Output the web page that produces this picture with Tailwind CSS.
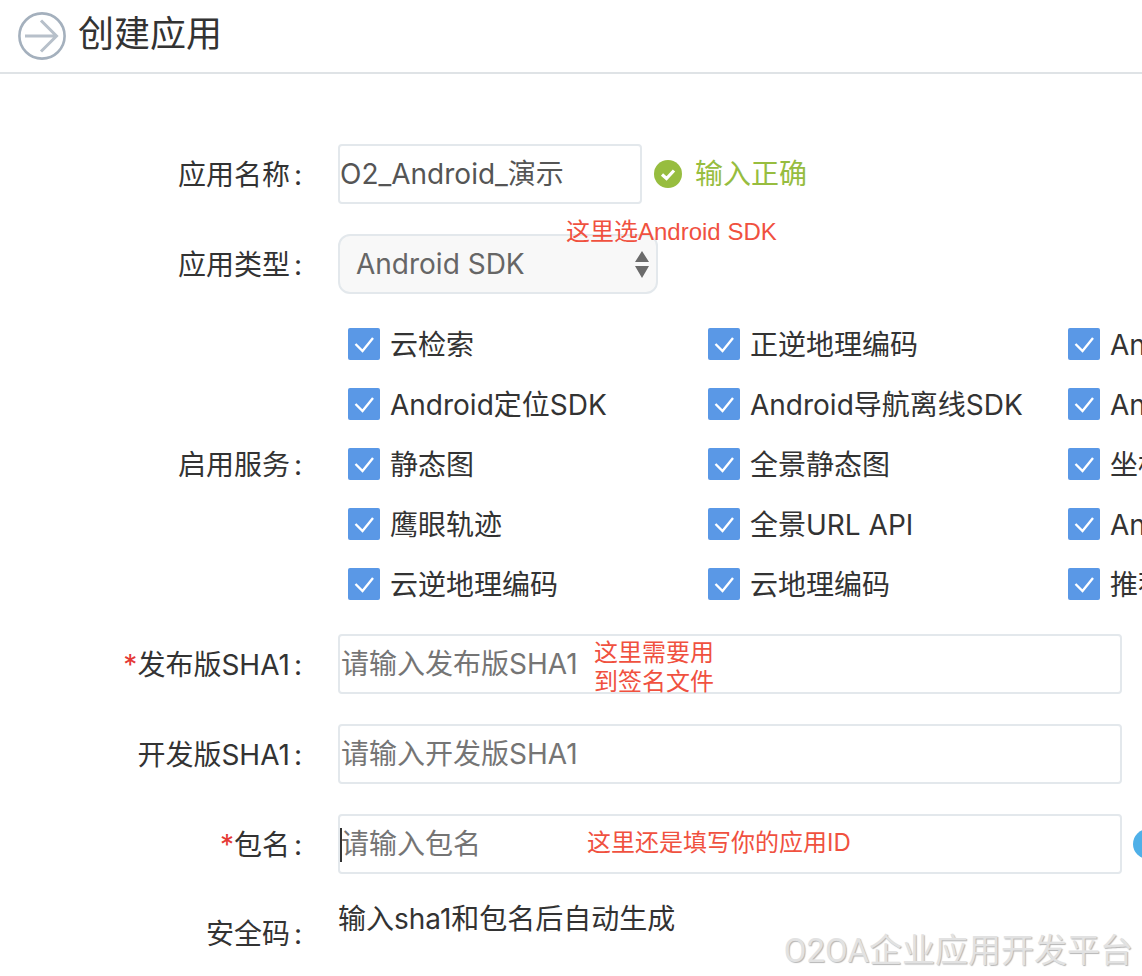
<!DOCTYPE html>
<html lang="zh-CN">
<head>
<meta charset="utf-8">
<script src="https://cdn.jsdelivr.net/npm/@tailwindcss/browser@4"></script>
<title>创建应用</title>
</head>
<body class="bg-white">
<div class="relative w-[1142px] h-[976px] overflow-hidden bg-white text-[28px] text-[#333] font-['Inter','Noto_Sans_CJK_SC',sans-serif]">
  <header class="h-[74px] border-b-2 border-[#dfe3e6] flex items-start pl-[18px] pt-[12px] gap-[12px]">
    <svg class="w-[48px] h-[48px]" viewBox="0 0 48 48" fill="none">
      <circle cx="24" cy="24" r="22.6" stroke="#a4b0bd" stroke-width="2.6"/>
      <path d="M7 24H38M23 8.5L38.5 24L23 39.5" stroke="#b7c0ca" stroke-width="3"/>
    </svg>
    <h1 class="text-[36px] leading-[44px] text-[#333]">创建应用</h1>
  </header>

  <main class="pt-[70px] flex flex-col">
    <div class="flex items-center h-[60px]">
      <label class="w-[302px] shrink-0 text-right pt-[1px]">应用名称<span class="ml-[4px]">:</span></label>
      <input class="ml-[36px] w-[304px] h-[60px] border-2 border-[#e3e8ec] rounded-[4px] pl-[0px] pb-[4px] text-[#555] outline-none" value="O2_Android_演示">
      <svg class="ml-[12px] w-[28px] h-[28px]" viewBox="0 0 28 28"><circle cx="14" cy="14" r="14" fill="#97bd3f"/><path d="M8 14.5L12.5 18.5L20 10.5" fill="none" stroke="#fff" stroke-width="3.2"/></svg>
      <span class="ml-[13px] text-[#97bd3f]">输入正确</span>
    </div>

    <div class="flex items-center h-[60px] mt-[30px]">
      <label class="w-[302px] shrink-0 text-right pt-[1px]">应用类型<span class="ml-[4px]">:</span></label>
      <div class="relative ml-[36px] w-[320px] h-[60px] border-2 border-[#e3e8ec] rounded-[12px] bg-[#f8f8f8] pl-[16px] flex items-center text-[#666]">
        Android SDK
        <svg class="absolute right-[6px] top-[15px] w-[16px] h-[28px]" viewBox="0 0 16 28"><path d="M8 0L15 11H1Z M1 15H15L8 27Z" fill="#6b6b6b"/></svg>
      </div>
    </div>

    <div class="flex items-center mt-[20px]">
      <label class="w-[302px] shrink-0 text-right pt-[1px]">启用服务<span class="ml-[4px]">:</span></label>
      <div class="ml-[46px] shrink-0 grid grid-cols-[360px_360px_360px] whitespace-nowrap">
        <div class="flex items-center gap-[10px] h-[60px]"><svg class="w-[32px] h-[32px]" viewBox="0 0 32 32"><rect width="32" height="32" rx="2" fill="#5a98e6"/><path d="M7.5 16L14.5 23L25 10" fill="none" stroke="#fff" stroke-width="2.4"/></svg><span class="pt-[2px]">云检索</span></div>
        <div class="flex items-center gap-[10px] h-[60px]"><svg class="w-[32px] h-[32px]" viewBox="0 0 32 32"><rect width="32" height="32" rx="2" fill="#5a98e6"/><path d="M7.5 16L14.5 23L25 10" fill="none" stroke="#fff" stroke-width="2.4"/></svg><span class="pt-[2px]">正逆地理编码</span></div>
        <div class="flex items-center gap-[10px] h-[60px]"><svg class="w-[32px] h-[32px]" viewBox="0 0 32 32"><rect width="32" height="32" rx="2" fill="#5a98e6"/><path d="M7.5 16L14.5 23L25 10" fill="none" stroke="#fff" stroke-width="2.4"/></svg><span class="pt-[2px]">An</span></div>
        <div class="flex items-center gap-[10px] h-[60px]"><svg class="w-[32px] h-[32px]" viewBox="0 0 32 32"><rect width="32" height="32" rx="2" fill="#5a98e6"/><path d="M7.5 16L14.5 23L25 10" fill="none" stroke="#fff" stroke-width="2.4"/></svg><span class="pt-[2px]">Android定位SDK</span></div>
        <div class="flex items-center gap-[10px] h-[60px]"><svg class="w-[32px] h-[32px]" viewBox="0 0 32 32"><rect width="32" height="32" rx="2" fill="#5a98e6"/><path d="M7.5 16L14.5 23L25 10" fill="none" stroke="#fff" stroke-width="2.4"/></svg><span class="pt-[2px]">Android导航离线SDK</span></div>
        <div class="flex items-center gap-[10px] h-[60px]"><svg class="w-[32px] h-[32px]" viewBox="0 0 32 32"><rect width="32" height="32" rx="2" fill="#5a98e6"/><path d="M7.5 16L14.5 23L25 10" fill="none" stroke="#fff" stroke-width="2.4"/></svg><span class="pt-[2px]">An</span></div>
        <div class="flex items-center gap-[10px] h-[60px]"><svg class="w-[32px] h-[32px]" viewBox="0 0 32 32"><rect width="32" height="32" rx="2" fill="#5a98e6"/><path d="M7.5 16L14.5 23L25 10" fill="none" stroke="#fff" stroke-width="2.4"/></svg><span class="pt-[2px]">静态图</span></div>
        <div class="flex items-center gap-[10px] h-[60px]"><svg class="w-[32px] h-[32px]" viewBox="0 0 32 32"><rect width="32" height="32" rx="2" fill="#5a98e6"/><path d="M7.5 16L14.5 23L25 10" fill="none" stroke="#fff" stroke-width="2.4"/></svg><span class="pt-[2px]">全景静态图</span></div>
        <div class="flex items-center gap-[10px] h-[60px]"><svg class="w-[32px] h-[32px]" viewBox="0 0 32 32"><rect width="32" height="32" rx="2" fill="#5a98e6"/><path d="M7.5 16L14.5 23L25 10" fill="none" stroke="#fff" stroke-width="2.4"/></svg><span class="pt-[2px]">坐标</span></div>
        <div class="flex items-center gap-[10px] h-[60px]"><svg class="w-[32px] h-[32px]" viewBox="0 0 32 32"><rect width="32" height="32" rx="2" fill="#5a98e6"/><path d="M7.5 16L14.5 23L25 10" fill="none" stroke="#fff" stroke-width="2.4"/></svg><span class="pt-[2px]">鹰眼轨迹</span></div>
        <div class="flex items-center gap-[10px] h-[60px]"><svg class="w-[32px] h-[32px]" viewBox="0 0 32 32"><rect width="32" height="32" rx="2" fill="#5a98e6"/><path d="M7.5 16L14.5 23L25 10" fill="none" stroke="#fff" stroke-width="2.4"/></svg><span class="pt-[2px]">全景URL API</span></div>
        <div class="flex items-center gap-[10px] h-[60px]"><svg class="w-[32px] h-[32px]" viewBox="0 0 32 32"><rect width="32" height="32" rx="2" fill="#5a98e6"/><path d="M7.5 16L14.5 23L25 10" fill="none" stroke="#fff" stroke-width="2.4"/></svg><span class="pt-[2px]">An</span></div>
        <div class="flex items-center gap-[10px] h-[60px]"><svg class="w-[32px] h-[32px]" viewBox="0 0 32 32"><rect width="32" height="32" rx="2" fill="#5a98e6"/><path d="M7.5 16L14.5 23L25 10" fill="none" stroke="#fff" stroke-width="2.4"/></svg><span class="pt-[2px]">云逆地理编码</span></div>
        <div class="flex items-center gap-[10px] h-[60px]"><svg class="w-[32px] h-[32px]" viewBox="0 0 32 32"><rect width="32" height="32" rx="2" fill="#5a98e6"/><path d="M7.5 16L14.5 23L25 10" fill="none" stroke="#fff" stroke-width="2.4"/></svg><span class="pt-[2px]">云地理编码</span></div>
        <div class="flex items-center gap-[10px] h-[60px]"><svg class="w-[32px] h-[32px]" viewBox="0 0 32 32"><rect width="32" height="32" rx="2" fill="#5a98e6"/><path d="M7.5 16L14.5 23L25 10" fill="none" stroke="#fff" stroke-width="2.4"/></svg><span class="pt-[2px]">推荐</span></div>
      </div>
    </div>

    <div class="flex items-center h-[60px] mt-[20px]">
      <label class="w-[302px] shrink-0 text-right pt-[1px]"><span class="text-[#e53935]">*</span>发布版SHA1<span class="ml-[4px]">:</span></label>
      <input class="ml-[36px] w-[784px] h-[60px] border-2 border-[#e3e8ec] rounded-[4px] pl-[1px] outline-none placeholder:text-[#757575]" placeholder="请输入发布版SHA1">
    </div>

    <div class="flex items-center h-[60px] mt-[30px]">
      <label class="w-[302px] shrink-0 text-right pt-[1px]">开发版SHA1<span class="ml-[4px]">:</span></label>
      <input class="ml-[36px] w-[784px] h-[60px] border-2 border-[#e3e8ec] rounded-[4px] pl-[1px] outline-none placeholder:text-[#757575]" placeholder="请输入开发版SHA1">
    </div>

    <div class="flex items-center h-[60px] mt-[30px]">
      <label class="w-[302px] shrink-0 text-right pt-[1px]"><span class="text-[#e53935]">*</span>包名<span class="ml-[4px]">:</span></label>
      <div class="relative ml-[36px] w-[784px] h-[60px] shrink-0">
        <input class="w-full h-full border-2 border-[#e3e8ec] rounded-[4px] pl-[1px] outline-none placeholder:text-[#757575]" placeholder="请输入包名">
        <span class="absolute left-[2px] top-[14px] w-[1.5px] h-[34px] bg-[#333]"></span>
      </div>
      <span class="ml-[11px] w-[30px] h-[30px] rounded-full bg-[#4fb0e8] shrink-0"></span>
    </div>

    <div class="flex items-start h-[60px] mt-[30px]">
      <label class="w-[302px] shrink-0 text-right leading-[60px]">安全码<span class="ml-[4px]">:</span></label>
      <span class="ml-[36px] leading-[30px] whitespace-nowrap">输入sha1和包名后自动生成</span>
    </div>
  </main>

  <div class="absolute left-[566px] top-[217px] text-[24px] leading-[29px] text-[#f0513f] whitespace-nowrap font-['Liberation_Sans','Noto_Sans_CJK_SC',sans-serif]">这里选Android SDK</div>
  <div class="absolute left-[594px] top-[638px] text-[24px] leading-[29px] text-[#f0513f] whitespace-nowrap">这里需要用<br>到签名文件</div>
  <div class="absolute left-[587px] top-[828px] text-[24px] leading-[29px] text-[#f0513f] whitespace-nowrap">这里还是填写你的应用ID</div>
  <div class="absolute right-[9px] top-[931px] text-[33px] leading-[40px] text-[#e2e2e2] whitespace-nowrap [text-shadow:1px_1px_1px_#b5b5b5] font-['Roboto','Noto_Sans_CJK_SC',sans-serif]">O2OA企业应用开发平台</div>
</div>
</body>
</html>
